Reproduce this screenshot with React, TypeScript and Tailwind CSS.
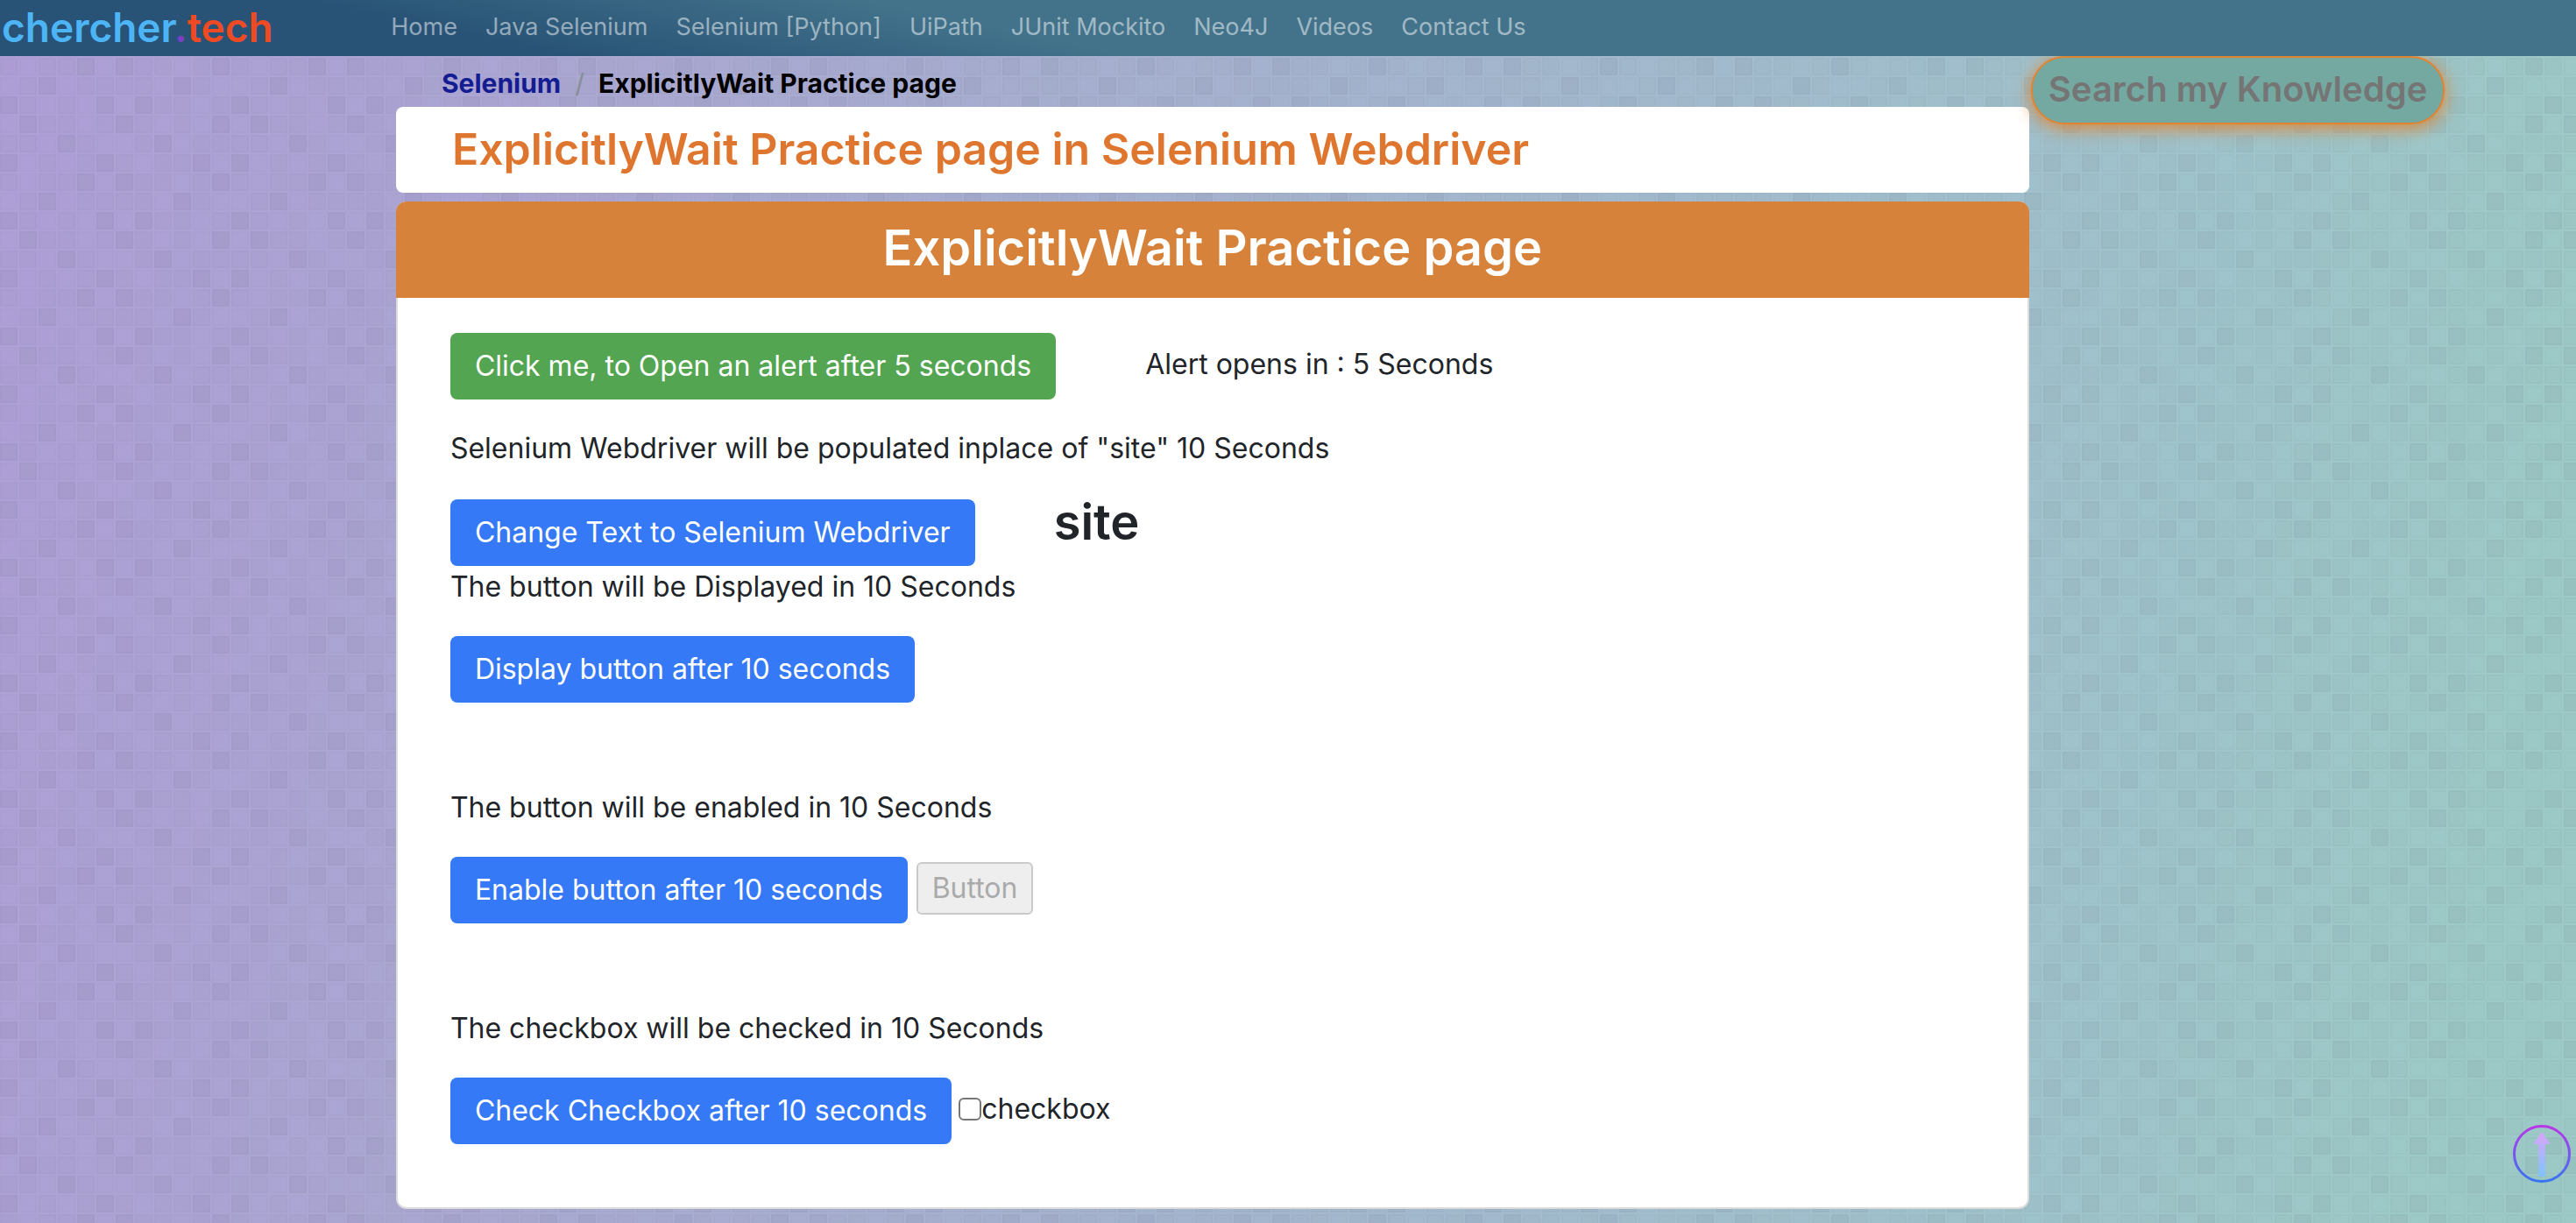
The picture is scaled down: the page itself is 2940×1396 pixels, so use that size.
import type { ButtonHTMLAttributes } from 'react'

const CELL = 22
const DARK = [[1, 6, 11], [3, 8], [0, 5, 10], [4, 6, 11], [2, 9], [0, 5, 7]]
const LIGHT = [[0, 4, 8, 10], [2, 5, 6, 9], [1, 3, 7, 11], [1, 5, 9], [0, 3, 8, 11], [2, 4, 6, 10]]
const COLUMNS = Array.from({ length: 12 }, (_, i) => i)

function Mosaic() {
  return (
    <svg className="pointer-events-none absolute inset-0 -z-10 h-full w-full" aria-hidden="true">
      <defs>
        <pattern id="mosaic" width={264} height={132} patternUnits="userSpaceOnUse">
          {DARK.map((dark, r) =>
            COLUMNS.map((c) => {
              const isDark = dark.includes(c)
              const opacity = isDark ? 0.06 : LIGHT[r].includes(c) ? 0.003 : 0.022
              return (
                <g key={`${r}-${c}`} fill="#30303c">
                  <rect x={c * CELL} y={r * CELL} width={20} height={20} fillOpacity={opacity} />
                  <rect x={c * CELL + 1} y={r * CELL + 1} width={18} height={18} fill="none" stroke="#30303c" strokeWidth={2} strokeOpacity={0.018} />
                </g>
              )
            }),
          )}
        </pattern>
      </defs>
      <rect width="100%" height="100%" fill="url(#mosaic)" />
    </svg>
  )
}

const LINKS = ['Home', 'Java Selenium', 'Selenium [Python]', 'UiPath', 'JUnit Mockito', 'Neo4J', 'Videos', 'Contact Us']

function Action({ className = 'bg-[#3579f6]', ...props }: ButtonHTMLAttributes<HTMLButtonElement>) {
  return <button type="button" className={`h-[76px] shrink-0 rounded-lg px-7 text-[32px] text-white ${className}`} {...props} />
}

export default function App() {
  return (
    <div className="relative isolate min-h-screen bg-[linear-gradient(100deg,#af9fd7_0%,#aaa9d2_25%,#a5b5cf_50%,#a0c4cc_80%,#9dcac7_95%)] font-['Inter','Liberation_Sans',sans-serif] text-[#212529]">
      <Mosaic />
      <header className="relative z-10 flex h-16 items-center bg-[linear-gradient(12deg,#285376_0%,#285376_20%,#43738b_40%,#43738b_100%)] pb-0.5">
        <a href="#" className="w-[14.5%] pl-0.5 text-[46px] leading-none font-semibold text-[#4db5f5]">
          chercher<span className="text-[#7b3fc4]">.</span><span className="text-[#ee4a24]">tech</span>
        </a>
        <nav className="flex gap-8 pl-5 text-[27px] text-white/50">
          {LINKS.map((label) => <a key={label} href="#" className="whitespace-nowrap">{label}</a>)}
        </nav>
      </header>

      <div className="flex items-start">
        <main className="ml-[15.37%] w-[63.4%]">
          <nav aria-label="Breadcrumb" className="flex h-[58px] items-center gap-4 pt-1 pl-[52px] text-[30px] font-bold">
            <a href="#" className="text-[#141c92]">Selenium</a>
            <span className="font-normal text-[#868e96]">/</span>
            <span className="text-black">ExplicitlyWait Practice page</span>
          </nav>
          <div className="flex h-[98px] items-center rounded-lg bg-white pb-0.5 pl-16">
            <h1 className="text-[50px] leading-none font-semibold text-[#df762f]">ExplicitlyWait Practice page in Selenium Webdriver</h1>
          </div>
          <section className="mt-2.5 rounded-xl border-2 border-t-0 border-[#dcdcdc] bg-white">
            <h2 className="-mx-0.5 flex h-[110px] items-center justify-center rounded-t-xl bg-[#d6823b] pb-1 text-[56px] font-semibold text-white">ExplicitlyWait Practice page</h2>
            <div className="px-[60px] pt-10 pb-[72px] text-[32px] leading-[48px]">
              <div className="flex items-center gap-[102px]">
                <Action className="bg-[#53a551]">Click me, to Open an alert after 5 seconds</Action>
                <p className="pb-1">Alert opens in : 5 Seconds</p>
              </div>
              <p className="mt-8">Selenium Webdriver will be populated inplace of &quot;site&quot; 10 Seconds</p>
              <div className="mt-[34px] flex items-start gap-[90px]">
                <Action>Change Text to Selenium Webdriver</Action>
                <strong className="pt-0.5 text-[56px] font-semibold">site</strong>
              </div>
              <p>The button will be Displayed in 10 Seconds</p>
              <div className="mt-8 flex"><Action>Display button after 10 seconds</Action></div>
              <p className="mt-24">The button will be enabled in 10 Seconds</p>
              <div className="mt-8 flex items-center gap-2.5">
                <Action>Enable button after 10 seconds</Action>
                <div className="flex pb-1">
                  <button type="button" disabled className="h-[60px] rounded-md border-2 border-[#cacaca] bg-[#eeeeee] px-4 text-[32px] leading-none text-[#aaaaaa]">Button</button>
                </div>
              </div>
              <p className="mt-24">The checkbox will be checked in 10 Seconds</p>
              <div className="mt-8 flex items-center gap-2">
                <Action>Check Checkbox after 10 seconds</Action>
                <label className="flex items-center pb-1">
                  <input type="checkbox" className="h-[26px] w-[26px] appearance-none rounded-md border-2 border-[#767676] bg-white" />
                  checkbox
                </label>
              </div>
            </div>
          </section>
        </main>
        <input type="text" aria-label="Search my Knowledge" placeholder="Search my Knowledge" className="ml-0.5 h-[78px] w-[472px] shrink-0 rounded-[38px] border-2 border-[#e08431] bg-[#74a9a1] pb-1 pl-[18px] text-[40px] font-semibold shadow-[0_4px_20px_#e08431] placeholder:text-[#757575]" />
      </div>

      <button type="button" aria-label="Back to top" className="absolute right-[6px] bottom-[46px] h-[66px] w-[66px]">
        <svg viewBox="0 0 66 66" className="h-full w-full">
          <defs>
            <linearGradient id="ring" x1="0" y1="0" x2="0" y2="66" gradientUnits="userSpaceOnUse"><stop stopColor="#bb35e8" /><stop offset="1" stopColor="#3576f2" /></linearGradient>
            <linearGradient id="arrow" x1="0" y1="9" x2="0" y2="59" gradientUnits="userSpaceOnUse"><stop stopColor="#d8a6f8" /><stop offset="1" stopColor="#7fc4ff" /></linearGradient>
          </defs>
          <circle cx="33" cy="33" r="31.5" fill="none" stroke="url(#ring)" strokeWidth="3" />
          <path d="M33 8 43 22H37V59H29V22H23Z" fill="url(#arrow)" />
        </svg>
      </button>
    </div>
  )
}
